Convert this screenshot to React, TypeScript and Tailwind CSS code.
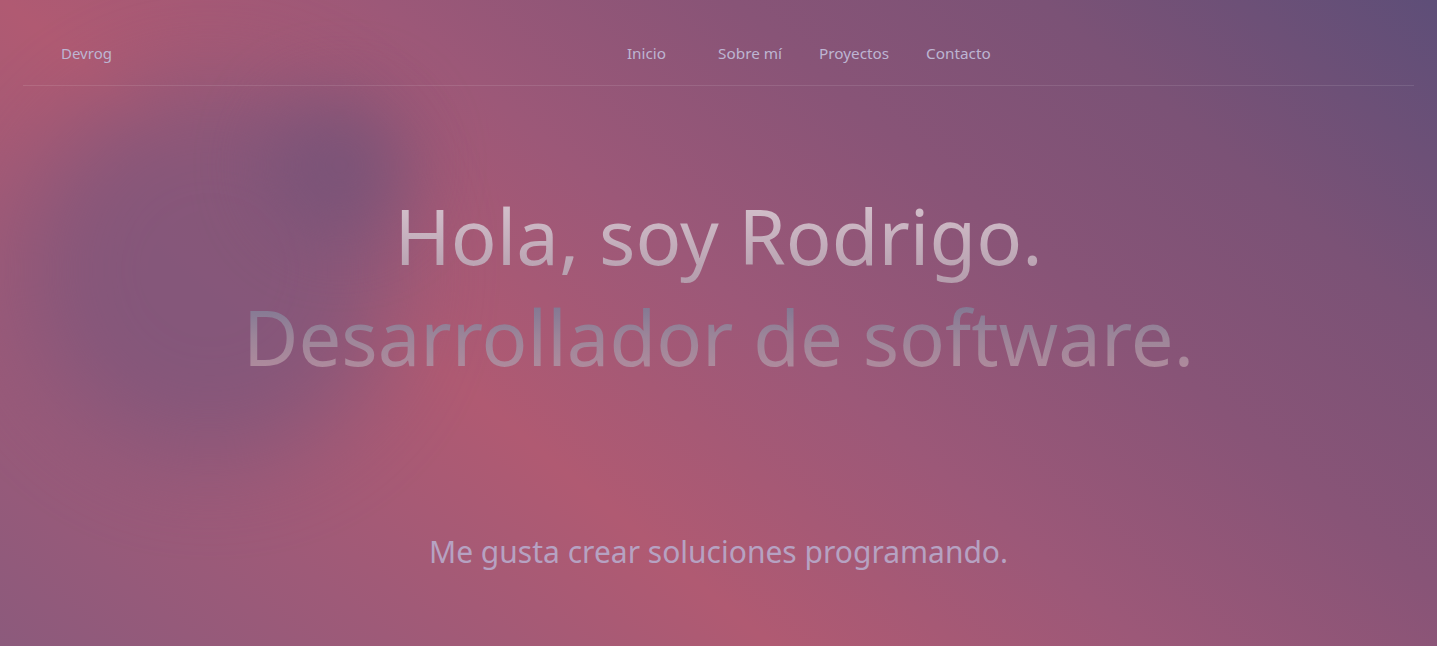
import React from 'react';

const links = ['Inicio', 'Sobre mí', 'Proyectos', 'Contacto'];

export default function App() {
  return (
    <div className="relative min-h-[646px] overflow-hidden bg-[linear-gradient(40deg,#8c5a7c_0%,#9e5a78_18%,#b05a72_35%,#9c5878_52%,#885477_68%,#7b5276_82%,#5e4e78_100%)] font-['Noto_Sans',sans-serif]">
      {/* blurred blobs */}
      <div className="pointer-events-none absolute left-[20px] top-[80px] h-[380px] w-[380px] rounded-full bg-[#7a567c] opacity-75 blur-[50px]" />
      <div className="pointer-events-none absolute left-[270px] top-[95px] h-[140px] w-[140px] rounded-full bg-[#6f5278] opacity-70 blur-[40px]" />

      <div className="relative">
        <header className="mx-[23px] flex items-center border-b border-white/10 pb-[20px] pt-[41px]">
          <a className="ml-[38px] text-[15px] leading-6 text-[#bdb5d2]">Devrog</a>
          <nav className="ml-[515px] flex items-center gap-[37px] text-[15.3px] leading-6 text-[#bdb5d2]">
            {links.map((l, i) => (
              <a key={l} className={i === 0 ? 'pr-[15px]' : ''}>
                {l}
              </a>
            ))}
          </nav>
        </header>

        <main className="flex flex-col items-center pt-[99px]">
          <h1 className="text-center text-[76px] font-normal leading-[101px]">
            <span className="block bg-gradient-to-b from-[#dac8d2] to-[#b39bab] bg-clip-text text-transparent">
              Hola, soy Rodrigo.
            </span>
            <span className="block bg-gradient-to-b from-[#72708f] via-[#9c8599] to-[#ba8e9f] bg-clip-text text-transparent">
              Desarrollador de software.
            </span>
          </h1>
          <p className="mt-[142px] text-[30px] leading-[45px] text-[#b6a2c2]">Me gusta crear soluciones programando.</p>
        </main>
      </div>
    </div>
  );
}
